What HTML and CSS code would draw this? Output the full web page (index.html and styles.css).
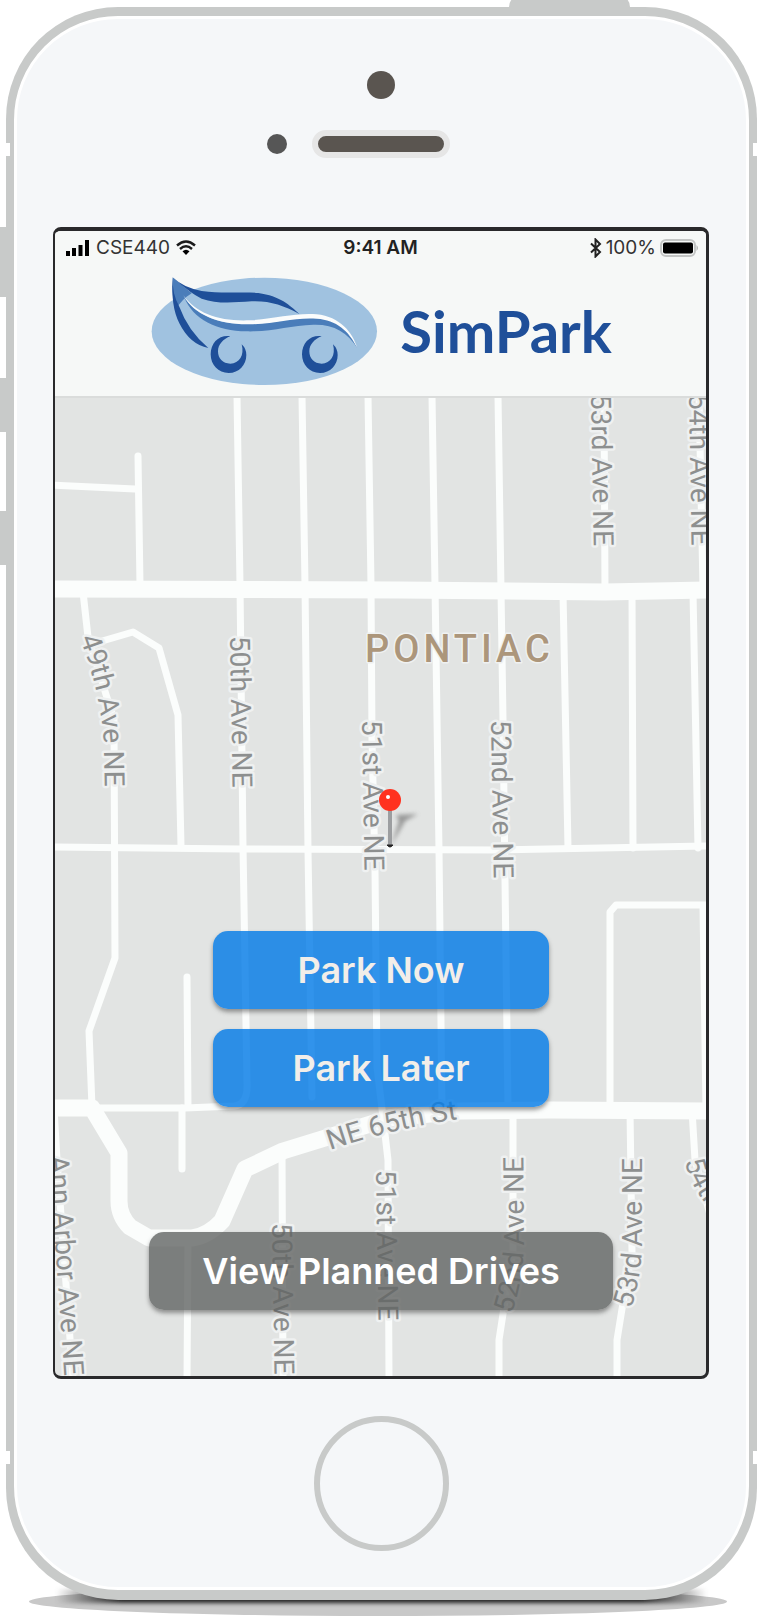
FILE: index.html
```html
<!DOCTYPE html>
<html lang="en">
<head>
<meta charset="utf-8">
<meta name="viewport" content="width=device-width, initial-scale=1">
<title>SimPark</title>
<link rel="stylesheet" href="styles.css">
</head>
<body>
<div class="stage">
  <div class="phone">
    <span class="side-key power"></span>
    <span class="side-key mute"></span>
    <span class="side-key volume-up"></span>
    <span class="side-key volume-down"></span>
    <span class="seam seam-left seam-high"></span>
    <span class="seam seam-right seam-high"></span>
    <span class="seam seam-left seam-low"></span>
    <span class="seam seam-right seam-low"></span>
    <div class="face">
      <div class="camera"></div>
      <div class="earpiece">
        <span class="sensor"></span>
        <span class="speaker"></span>
      </div>
      <main class="screen">
        <header class="header">
          <div class="status">
            <div class="status-left">
              <svg class="signal" viewBox="0 0 24 16" aria-hidden="true"><path d="M0 11h4v5H0zM6 8h4v8H6zM12.500 5h4v11h-4zM19 0h4v16h-4z"/></svg>
              <span>CSE440</span>
              <svg class="wifi" viewBox="0 0 20 16" aria-hidden="true"><g fill="none" stroke="#1b1b1b" stroke-width="2.400"><path d="M1 5.500Q10-2.500 19 5.500"/><path d="M4 9Q10 3.700 16 9"/></g><path d="M6.500 11.300Q10 8.300 13.500 11.300L10 15z"/></svg>
            </div>
            <span class="clock">9:41 AM</span>
            <div class="status-right">
              <svg class="bluetooth" viewBox="0 0 12 20" aria-hidden="true"><path d="M1 5.500l9 8.500-4.500 4.500v-17L10 6l-9 8.500" fill="none" stroke="#222" stroke-width="2"/></svg>
              <span>100%</span>
              <svg class="battery" viewBox="0 0 40 18" aria-hidden="true"><rect x="1" y="1" width="34" height="16" rx="5" fill="#f6f8f7" stroke="#c3c5c4" stroke-width="2"/><rect x="3" y="3.500" width="30" height="11" rx="2"/><path d="M36.500 6q3 3 0 6z" fill="#b5b7b6"/></svg>
            </div>
          </div>
          <div class="brand">
            <svg class="logo" viewBox="303 171 681 328" aria-hidden="true">
              <ellipse cx="643" cy="336" rx="338" ry="161" fill="#a0c2e0"/>
              <path d="M368 174L425 222Q395 240 378 270Q364 235 368 174Z" fill="#4a7dba"/>
              <path d="M368 174Q400 205 455 215C520 224 575 216 625 221C690 230 720 258 748 284C700 258 660 244 605 246C545 250 500 254 455 238Q420 222 368 174Z" fill="#1f4f99"/>
              <path d="M368 174Q366 225 388 262Q414 334 475 386Q420 376 388 312Q362 262 368 174Z" fill="#1f4f99"/>
              <path d="M402 232C440 292 515 316 600 314C680 312 735 290 800 295C870 302 905 340 922 386C892 338 850 314 790 316C720 318 665 338 590 336C500 334 430 302 402 232Z" fill="#4a7dba"/>
              <path d="M400 228C440 284 510 307 600 303C680 298 735 280 800 285C870 292 908 340 922 386C896 334 860 302 800 298C735 293 680 313 600 315C510 317 432 288 400 228Z" fill="#fbfcfc"/>
              <g fill="#1f4f99">
                <path id="wheel" d="M541 351C508 346 482 370 482 405C482 437 505 461 536 461C567 461 589 437 589 407Q589 388 575 375C584 408 568 433 541 433C518 433 504 417 504 396C504 375 520 359 541 351Z"/>
                <use href="#wheel" x="274"/>
              </g>
            </svg>
            <h1 class="name">SimPark</h1>
          </div>
        </header>
        <section class="map-area">
          <svg class="map" viewBox="55 398 651 978" preserveAspectRatio="xMidYMid slice" role="img" aria-label="Map of Pontiac">
            <defs>
              <path id="curve-49" d="M80 638Q101 694 104 745L105 810"/>
              <path id="curve-52" d="M512 1314Q524 1275 524 1242L523 1130"/>
              <path id="curve-53" d="M631 1309Q642 1275 642 1242L642 1130"/>
              <path id="curve-54" d="M685 1161Q690 1192 732 1234"/>
              <path id="curve-65" d="M330 1150Q400 1126 475 1117"/>
              <filter id="soft" x="-50%" y="-50%" width="200%" height="200%"><feGaussianBlur stdDeviation="2"/></filter>
            </defs>
            <g class="road">
              <path d="M237 396L240 585L243 846L247 1083Q248 1105 234 1106L185 1108H92"/>
              <path d="M302 396L305 585L308 850L312 1097"/>
              <path d="M368 396L371 585L372 740L375 870L377 1067L385 1134L388 1160L389 1380"/>
              <path d="M432 396L435 585L439 850L442 1110"/>
              <path d="M498 396L501 590L503 720L505 880L508 1110"/>
              <path d="M513 1110V1252L503 1314L499 1340V1380"/>
              <path d="M604 396L605 588M699 396L703 588"/>
              <path d="M563 592L568 848M632 592L633 848M693 592L698 848"/>
              <path d="M50 847L240 849L500 850L710 846"/>
              <path d="M138 456L140 585M50 485L135 489"/>
              <path d="M83 592L88 637L114 720L115 958L89 1031L92 1107"/>
              <path d="M92 644L133 632L159 648L178 715L181 846"/>
              <path d="M187 977L188 1107M182 1108V1169"/>
              <path d="M282 1151L283 1380M188 1238L187 1380"/>
              <path d="M610 1110V912L616 905H710M703 905L706 1110"/>
              <path d="M630 1110L632 1252L622 1309L617 1340V1380"/>
              <path d="M692 1110L695 1160L712 1222M54 1108L57 1160L73 1380"/>
            </g>
            <g class="avenue">
              <path d="M50 589L400 590L605 592L712 590"/>
              <path d="M50 1108H92L119 1153V1201Q119 1216 130 1227L149 1238H192Q208 1236 222 1221L245 1169L283 1151L390 1118L460 1111L550 1110L712 1111"/>
            </g>
            <g class="label">
              <text><textPath href="#curve-49">49th Ave NE</textPath></text>
              <text transform="translate(230 636) rotate(89)">50th Ave NE</text>
              <text transform="translate(362 720) rotate(89)">51st Ave NE</text>
              <text transform="translate(491 720) rotate(89)">52nd Ave NE</text>
              <text transform="translate(591 394) rotate(89)">53rd Ave NE</text>
              <text transform="translate(689 394) rotate(89)">54th Ave NE</text>
              <text transform="translate(49 1156) rotate(86)">Ann Arbor Ave NE</text>
              <text transform="translate(272 1223) rotate(89)">50th Ave NE</text>
              <text transform="translate(376 1170) rotate(89)">51st Ave NE</text>
              <text><textPath href="#curve-52">52nd Ave NE</textPath></text>
              <text><textPath href="#curve-53">53rd Ave NE</textPath></text>
              <text><textPath href="#curve-54">54th</textPath></text>
              <text><textPath href="#curve-65">NE 65th St</textPath></text>
            </g>
            <text class="district" x="365" y="662">PONTIAC</text>
            <g>
              <path d="M391 846L399 821L396 815L418 814L405 821Z" fill="#777" opacity=".7" filter="url(#soft)"/>
              <path d="M390 808V845" stroke="#9c9ea0" stroke-width="4"/>
              <path d="M387 845q3 4 6 0z" fill="#222" stroke="#222"/>
              <circle cx="390" cy="800" r="11" fill="#ff321f"/>
              <circle cx="388" cy="797" r="2" fill="#fff"/>
            </g>
          </svg>
          <div class="actions">
            <button class="action park" type="button">Park Now</button>
            <button class="action park" type="button">Park Later</button>
            <button class="action planned" type="button">View Planned Drives</button>
          </div>
        </section>
      </main>
      <button class="home" type="button" aria-label="Home"></button>
    </div>
  </div>
</div>
</body>
</html>
```
FILE: styles.css
```css
* {
  box-sizing: border-box;
}

body {
  margin: 0;
  background: #fff;
  font-family: Inter, "Liberation Sans", sans-serif;
}

.stage {
  position: relative;
  z-index: 0;
  padding: 7px 5px 21px 6px;
  overflow: hidden;
}

.phone {
  position: relative;
  padding: 9px 8px 10px;
  border-radius: 112px;
  background: #c8cac9;
}

/* Contact shadow under the handset */
.phone::before,
.phone::after {
  content: "";
  position: absolute;
  z-index: -1;
}

.phone::before {
  right: 30px;
  bottom: -16px;
  left: 23px;
  height: 29px;
  border-radius: 50%;
  background: #c8c8c8;
}

.phone::after {
  right: 50px;
  bottom: -3px;
  left: 50px;
  height: 14px;
  background: linear-gradient(90deg, transparent, #222 10%, #222 90%, transparent);
  filter: blur(2px);
}

.side-key {
  position: absolute;
  background: #c8cac9;
}

.power {
  top: -12px;
  right: 127px;
  width: 121px;
  height: 14px;
  border-radius: 12px 12px 0 0;
}

.mute,
.volume-up,
.volume-down {
  left: -10px;
  width: 14px;
  height: 54px;
}

.mute {
  top: 220px;
  height: 70px;
}

.volume-up {
  top: 371px;
}

.volume-down {
  top: 504px;
}

.seam {
  position: absolute;
  width: 4px;
  height: 13px;
  background: #fff;
}

.seam-left {
  left: 0;
}

.seam-right {
  right: 0;
}

.seam-high {
  top: 136px;
}

.seam-low {
  bottom: 136px;
}

.face {
  display: flex;
  flex-direction: column;
  align-items: center;
  padding: 52px 37px 36px 36px;
  border: 3px solid #fff;
  border-radius: 104px;
  background: #f5f7f9;
}

.camera {
  width: 28px;
  height: 28px;
  border-radius: 50%;
  background: #5a5550;
}

.earpiece {
  display: grid;
  grid-template-columns: 1fr auto 1fr;
  align-items: center;
  width: 100%;
  margin: 31px 0 69px;
}

.sensor {
  justify-self: end;
  width: 20px;
  height: 20px;
  margin-right: 25px;
  border-radius: 50%;
  background: #565656;
}

.speaker {
  width: 138px;
  height: 28px;
  border: 6px solid #e6e6e6;
  border-radius: 14px;
  background: #5a5550;
}

.screen {
  width: 100%;
  border: solid #29292b;
  border-width: 4px 3px 3px 2px;
  border-radius: 8px;
  overflow: hidden;
  background: #e2e4e3;
}

.header {
  padding-bottom: 8px;
  background: #f6f8f7;
}

.status {
  display: grid;
  grid-template-columns: 1fr auto 1fr;
  align-items: center;
  height: 34px;
  padding: 0 6px;
  color: #333;
  font-size: 19px;
  line-height: 24px;
}

.status-left,
.status-right {
  display: flex;
  align-items: center;
}

.status-left {
  gap: 6px;
  padding-left: 5px;
}

.status-right {
  justify-content: flex-end;
  gap: 4px;
}

.clock {
  color: #222;
  font-weight: 600;
}

.signal {
  width: 24px;
  height: 16px;
}

.wifi {
  width: 20px;
  height: 16px;
}

.bluetooth {
  width: 12px;
  height: 20px;
}

.battery {
  width: 40px;
  height: 18px;
}

.brand {
  display: flex;
  align-items: center;
  justify-content: center;
  gap: 22px;
  padding: 10px 0 1px 2px;
}

.logo {
  width: 227px;
  height: 112px;
}

.name {
  margin: 0;
  color: #1f4f99;
  font-family: Lato, "Liberation Sans", sans-serif;
  font-size: 58px;
  font-weight: 700;
  line-height: 80px;
}

.map-area {
  display: grid;
  border-top: 2px solid #dadcdb;
}

.map,
.actions {
  grid-area: 1 / 1;
}

.map {
  display: block;
  width: 100%;
}

.road,
.avenue {
  fill: none;
  stroke: #fbfdfc;
  stroke-linejoin: round;
}

.road {
  stroke-width: 7px;
  stroke-linecap: round;
}

.avenue {
  stroke-width: 17px;
}

.label,
.district {
  font-family: Roboto, sans-serif;
  paint-order: stroke;
  stroke: #eff1f1;
  stroke-linejoin: round;
}

.label {
  fill: #8d8f8f;
  font-size: 28px;
  stroke-width: 5px;
}

.district {
  fill: #ac967b;
  font-size: 38px;
  font-weight: 500;
  letter-spacing: 4px;
  stroke-width: 3px;
}

.actions {
  z-index: 1;
  display: flex;
  flex-direction: column;
  align-items: center;
  justify-content: flex-end;
  padding: 0 0 66px 1px;
}

.action {
  height: 78px;
  max-width: 90%;
  padding: 0;
  border: 0;
  border-radius: 15px;
  box-shadow: 0 3px 4px rgba(60, 60, 60, .5);
  font: 600 36px/40px Inter, "Liberation Sans", sans-serif;
}

.park {
  width: 336px;
  margin-bottom: 20px;
  background: rgba(4, 123, 231, .82);
  color: #f2eee9;
}

.planned {
  width: 464px;
  margin-top: 105px;
  background: rgba(98, 100, 99, .8);
  color: #fff;
}

.home {
  width: 135px;
  height: 135px;
  margin-top: 37px;
  padding: 0;
  border: 6px solid #c8cac9;
  border-radius: 50%;
  background: transparent;
}
```
